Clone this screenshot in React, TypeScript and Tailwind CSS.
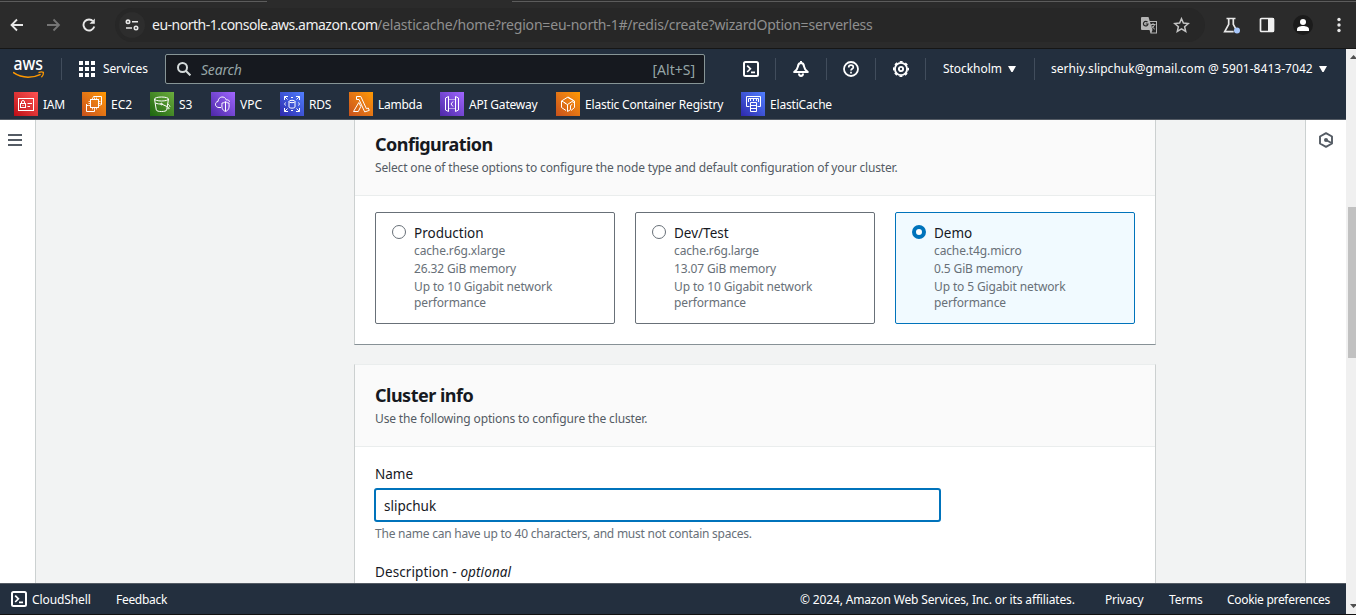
import React from "react";

type IconProps = { className?: string };

const CloudShellIcon = ({ className }: IconProps) => (
  <svg className={className} width="16" height="16" viewBox="0 0 16 16" fill="none" stroke="#fff" strokeWidth="2">
    <rect x="1" y="1" width="14" height="14" rx="1.5" />
    <path d="M4.2 4.6 7.4 7.8 4.2 11M8 11.3h4" strokeWidth="1.7" />
  </svg>
);

const BellIcon = () => (
  <svg width="16" height="16" viewBox="0 0 16 16" fill="none" stroke="#fff" strokeWidth="2" strokeLinejoin="round">
    <path d="M8 0v2M8 2C6 2 5.100 3.700 4.900 5.600 4.600 8 3.300 9.300 1.200 11h13.600c-2.100-1.700-3.400-3-3.700-5.400C10.900 3.700 10 2 8 2Z" />
    <path d="M6 12.500c0 1.500.8 2.400 2 2.400s2-.9 2-2.400" />
  </svg>
);

const HelpIcon = () => (
  <svg width="16" height="16" viewBox="0 0 16 16" fill="none" stroke="#fff" strokeWidth="1.8">
    <circle cx="8" cy="8" r="7" />
    <path d="M5.700 6.400C5.700 5 6.600 4.200 8 4.200s2.300.8 2.300 2c0 1.500-2.300 1.700-2.300 3.400M8 10.700v1.700" strokeWidth="1.700" />
  </svg>
);

const GearIcon = () => (
  <svg width="16" height="16" viewBox="0 0 16 16" fill="none" stroke="#fff">
    <circle cx="8" cy="8" r="6.100" strokeWidth="1.900" />
    <circle cx="8" cy="8" r="7.300" strokeWidth="1.500" strokeDasharray="2.900 2.834" strokeDashoffset="1.450" />
    <circle cx="8" cy="8" r="2.100" strokeWidth="1.900" />
  </svg>
);

const Caret = () => (
  <svg width="8" height="6" viewBox="0 0 8 6" fill="#fff">
    <path d="M0 0h8L4.600 6H3.400Z" />
  </svg>
);

const Divider = () => <div className="h-[22px] w-px shrink-0 bg-[#414d5c]" />;

const AwsLogo = () => (
  <svg className="-mt-[10px]" width="32" height="32" viewBox="0 -10 32 32">
    <text x="0.500" y="12" textLength="29.500" lengthAdjust="spacingAndGlyphs" fill="#fff" fontFamily="'Noto Sans', sans-serif" fontWeight="500" fontSize="17.500">
      aws
    </text>
    <path d="M.6 14.700C5 17.800 10 19.200 15 19.200c4.500 0 8.700-1 12-2.600" fill="none" stroke="#f90" strokeWidth="1.600" strokeLinecap="round" />
    <path d="M25.500 14.700c1.700-.8 3.700-.9 4.900-.4.200 1.600-.4 3.500-2 5" fill="none" stroke="#f90" strokeWidth="1.300" />
  </svg>
);

const glyphs: Record<string, React.ReactNode> = {
  IAM: (
    <>
      <rect x="4.500" y="6.500" width="15" height="12" />
      <rect x="6.500" y="11.500" width="5" height="4" />
      <path d="M7.500 11.500V10a1.500 1.500 0 0 1 3 0v1.500M9 13v1M13.500 11.500H18M13.500 14.500H16" />
    </>
  ),
  EC2: (
    <>
      <rect x="8.500" y="7.500" width="8" height="8" />
      <path d="M10.500 5.500v2M12.500 5.500v2M14.500 5.500v2M10.500 16v1.500M12.500 16v1.500M14.500 16v1.500M6.500 9.500h2M6.500 11.500h2M6.500 13.500h2M17 9.500h1.500M17 11.500h1.500M17 13.500h1.500" strokeOpacity=".8" />
      <path d="M11.500 4.500h8v8M4.500 12v7.500h8v-2M4.500 13.500h2M11.500 4.500v1M19.500 12.500h-1" />
    </>
  ),
  S3: (
    <>
      <ellipse cx="11.500" cy="7" rx="7" ry="2" />
      <path d="M4.500 7l1.800 11c.4 2 10 2 10.400 0l1.800-11M5.500 11c2 1 4 1 6 1l6.500 3c2 1.500 1.500 2-.5 1.500M17.800 12c1.500 1 2.300 2 2 3" />
      <circle cx="11.500" cy="12" r=".8" />
    </>
  ),
  VPC: (
    <>
      <path d="M10 15.500H8C3.500 15.500 3.500 9.800 7 9.500 7.300 4 14 3.500 15.300 8c2-.5 3 .5 3.200 1.800" />
      <path d="M14.500 9.500c1.300 1.200 2.300 1.500 3.500 1.500.3 4.500.2 7-3.500 8.500-3.700-1.500-3.800-4-3.500-8.500 1.200 0 2.200-.3 3.500-1.500ZM14.500 10v9" />
    </>
  ),
  RDS: (
    <>
      <path d="M4.500 8V4.500H8M4.500 4.500 7.500 7.500M16 4.500h3.500V8M19.500 4.500l-3 3M4.500 16v3.500H8M4.500 19.500l3-3M16 19.500h3.500V16M19.500 19.500l-3-3" />
      <ellipse cx="12" cy="9.500" rx="3" ry="1.200" />
      <path d="M9 9.500V15c0 1.500 6 1.500 6 0V9.500M5.500 10.500c-1 1-1 2 0 3M18.500 10.500c1 1 1 2 0 3M11 5.500h2M11 18.500h2" />
    </>
  ),
  Lambda: (
    <path d="M7.500 4.500h4.300l5.600 12.200 1.900-.7 1 2.400-4.600 1.500L10 7.500H7.500ZM9.800 10.500l2 4-2.500 5H4.500Z" />
  ),
  "API Gateway": (
    <path d="M8.500 4.500v15L5.500 18V6ZM15.500 4.500v15l3-1.500V6ZM9.500 7.500h1M11.500 7.500h1M13.500 7.500h1M9.500 16.500h1M11.500 16.500h1M13.500 16.500h1M13 9.500l-2 2.500 2 2.500" />
  ),
  "Elastic Container Registry": (
    <>
      <path d="M10 18.500 5.500 15.500V9L12 5l6.500 4v6.500l-3.500 3M5.500 9l4 2M12 5.500 18 9" />
      <path d="M11.500 19.500v-7l4.500-3 2.500 1.300M11.500 12.500 8.500 11M11.500 19.500l3-1.800v-4.200l1.800-1.200" />
    </>
  ),
  ElastiCache: (
    <path d="M8.500 14.500h-3v-10h14v10h-3M7.500 10V6.500h10V10M9.500 6.500v2.500M12.500 6.500v2.500M15.500 6.500v2.500M9.500 10.500h6v9h-6ZM9.500 13.500h6M9.500 16.500h6" />
  ),
};

const bookmarks = [
  { name: "IAM", slot: "w-[68px]", tile: "from-[#bd0816] to-[#ff5252]", text: "tracking-[-0.3px]" },
  { name: "EC2", slot: "w-[68px]", tile: "from-[#c8511b] to-[#ff9900]", text: "" },
  { name: "S3", slot: "w-[61px]", tile: "from-[#1b660f] to-[#6cae3e]", text: "" },
  { name: "VPC", slot: "w-[69px]", tile: "from-[#4d27a8] to-[#a166ff]", text: "" },
  { name: "RDS", slot: "w-[69px]", tile: "from-[#2e27ad] to-[#527fff]", text: "tracking-[-0.2px]" },
  { name: "Lambda", slot: "w-[91px]", tile: "from-[#c8511b] to-[#ff9900]", text: "tracking-[-0.25px]" },
  { name: "API Gateway", slot: "w-[116px]", tile: "from-[#4d27a8] to-[#a166ff]", text: "tracking-[-0.2px]" },
  { name: "Elastic Container Registry", slot: "w-[185px]", tile: "from-[#c8511b] to-[#ff9900]", text: "tracking-[-0.19px]" },
  { name: "ElastiCache", slot: "w-[110px]", tile: "from-[#2e27ad] to-[#527fff]", text: "tracking-[-0.18px]" },
];

function BrowserBar() {
  return (
    <div className="flex h-[49px] shrink-0 flex-col border-b border-[#161616] bg-[#2b2b2b]">
      <div className="flex h-[2px] shrink-0 justify-between pt-px">
        <div className="h-px w-[267px] bg-[#5c5c5c]" />
        <div className="h-px w-[844px] bg-[#5c5c5c]" />
      </div>
      <div className="flex h-[46px] items-center">
        <svg className="ml-[10px]" width="14" height="14" viewBox="0 0 14 14" fill="none" stroke="#e8e8e8" strokeWidth="1.800">
          <path d="M13 7H2M7 1.500 1.500 7 7 12.500" />
        </svg>
        <svg className="ml-[23px]" width="14" height="14" viewBox="0 0 14 14" fill="none" stroke="#757575" strokeWidth="1.800">
          <path d="M0 7h12M6.500 1.500 12 7l-5.500 5.500" />
        </svg>
        <svg className="ml-[21px]" width="14" height="14" viewBox="0 0 14 14" fill="none" stroke="#e8e8e8" strokeWidth="1.900">
          <path d="M12.300 8.500A5.500 5.500 0 1 1 11.300 3.500" />
          <path d="M12.800.5v5.300H7.500l2-2h1.600V2.200Z" fill="#e8e8e8" stroke="none" />
        </svg>
        <div className="ml-[19px] flex h-[34px] w-[1090px] items-center rounded-full bg-[#272727]">
          <div className="ml-[4px] flex size-[26px] items-center justify-center rounded-full bg-[#2d2d2d]">
            <svg width="14" height="12" viewBox="0 0 14 12" fill="none" stroke="#e8e8e8" strokeWidth="1.600">
              <circle cx="3" cy="2.800" r="1.700" />
              <path d="M7 2.800h6M1 9h6" />
              <circle cx="11" cy="9" r="1.700" />
            </svg>
          </div>
          <div className="ml-[7px] w-[989px] pb-[2px] font-['Noto_Sans',sans-serif] text-[14px] whitespace-nowrap text-[#8f8f8f]">
            <span className="inline-block w-[225px] tracking-[-0.5px] text-[#f0f0f0]">eu-north-1.console.aws.amazon.com</span>
            <span className="tracking-[-0.19px]">/elasticache/home?region=eu-north-1#/redis/create?wizardOption=serverless</span>
          </div>
          <svg width="17" height="17" viewBox="0 0 17 17" fill="none" stroke="#b4b4b4">
            <path d="M1 0h6.500l1.200 4H16v12.500H9.500L8.500 13H1a1 1 0 0 1-1-1V1a1 1 0 0 1 1-1Z" fill="#b4b4b4" stroke="none" />
            <path d="M9 5h6v10.500h-4.500l1-2.500Z" fill="#272727" stroke="none" />
            <path d="M6.500 5.200A2.300 2.300 0 1 0 7 7H4.700" stroke="#272727" strokeWidth="1.200" />
            <path d="M9.500 7.500h5M12 6v1.500M13.500 7.500c-.5 2-1.800 3.300-3.300 4.200M10.500 8.500c.7 1.500 1.800 2.700 3.300 3.700" strokeWidth="1" />
          </svg>
          <svg className="ml-[15px]" width="17" height="16" viewBox="0 0 17 16" fill="none" stroke="#c4c4c4" strokeWidth="1.500">
            <path d="M8.500 1.700l1.900 4.400 4.800.4-3.600 3.200 1.100 4.700-4.200-2.500-4.200 2.500 1.100-4.700L1.800 6.500l4.800-.4Z" />
          </svg>
        </div>
        <svg className="ml-[18px]" width="18" height="17" viewBox="0 0 18 17" fill="none" stroke="#e8e8e8" strokeWidth="1.700">
          <path d="M3.500 1.500h9M5.700 1.500v5.800L1.700 14.700h9M10.300 1.500v5.800l2.500 4.500" />
          <circle cx="14" cy="13.500" r="3" fill="#a8c7fa" stroke="none" />
        </svg>
        <svg className="ml-[18px]" width="16" height="16" viewBox="0 0 16 16">
          <rect x="1.500" y="1.500" width="13" height="13" rx="1" fill="none" stroke="#f1f1f1" strokeWidth="1.700" />
          <path d="M9 1h6v14H9Z" fill="#f1f1f1" />
        </svg>
        <svg className="ml-[18px]" width="20" height="20" viewBox="0 0 20 20">
          <circle cx="10" cy="10" r="10" fill="#1b1b1b" />
          <circle cx="10" cy="7" r="3" fill="#fff" />
          <path d="M4 16v-1.800C4 12 7 11 10 11s6 1 6 3.200V16Z" fill="#fff" />
        </svg>
        <svg className="ml-[24px]" width="4" height="16" viewBox="0 0 4 16" fill="#e8e8e8">
          <circle cx="2" cy="2.500" r="1.700" />
          <circle cx="2" cy="8" r="1.700" />
          <circle cx="2" cy="13.500" r="1.700" />
        </svg>
      </div>
    </div>
  );
}

function ConsoleHeader() {
  return (
    <header className="flex h-[71px] shrink-0 flex-col border-b border-[#545b64] bg-[#232f3e] text-[12px] text-white">
      <div className="flex h-[40px] items-center">
        <div className="ml-[13px] w-[48px]">
          <AwsLogo />
        </div>
        <Divider />
        <svg className="ml-[17px]" width="16" height="16" viewBox="0 0 16 16" fill="#fff">
          <path d="M0 0h4v4H0zM6 0h4v4H6zM12 0h4v4h-4zM0 6h4v4H0zM6 6h4v4H6zM12 6h4v4h-4zM0 12h4v4H0zM6 12h4v4H6zM12 12h4v4h-4z" />
        </svg>
        <span className="ml-[8px] w-[62px] shrink-0 tracking-[-0.12px]">Services</span>
        <div className="flex h-[30px] w-[540px] items-center justify-between rounded-[2px] border border-[#879596] bg-[#16191f] pr-[9px] pl-[11px] text-[14px] text-[#95a5a6]">
          <div className="flex items-center gap-[10px]">
            <svg width="14" height="14" viewBox="0 0 14 14" fill="none" stroke="#d5dbdb" strokeWidth="2">
              <circle cx="5.500" cy="5.500" r="4.500" />
              <path d="m8.800 8.800 4.600 4.600" />
            </svg>
            <span className="pt-px tracking-[-0.2px] italic">Search</span>
          </div>
          <span className="pt-px text-[14px]">[Alt+S]</span>
        </div>
        <div className="flex items-center pl-[38px]">
          <CloudShellIcon className="mr-[16px]" />
          <Divider />
          <div className="mx-[17px]"><BellIcon /></div>
          <Divider />
          <div className="mr-[16px] ml-[16px]"><HelpIcon /></div>
          <Divider />
          <div className="mr-[16px] ml-[17px]"><GearIcon /></div>
          <Divider />
          <div className="flex w-[108px] items-center pl-[17px]">
            <span className="w-[65px] tracking-[-0.05px] whitespace-nowrap">Stockholm</span>
            <Caret />
          </div>
          <Divider />
          <div className="flex items-center pl-[16px]">
            <span className="w-[268px] tracking-[0.04px] whitespace-nowrap">serhiy.slipchuk@gmail.com @ 5901-8413-7042</span>
            <Caret />
          </div>
        </div>
      </div>
      <nav className="flex h-[30px] items-center pl-[14px]">
        {bookmarks.map((b) => (
          <div key={b.name} className={`flex shrink-0 items-center gap-[5px] ${b.slot}`}>
            <div className={`size-6 shrink-0 bg-linear-to-tr ${b.tile}`}>
              <svg width="24" height="24" viewBox="0 0 24 24" fill="none" stroke="#fff" strokeWidth="1">
                {glyphs[b.name]}
              </svg>
            </div>
            <span className={`pt-px whitespace-nowrap ${b.text}`}>{b.name}</span>
          </div>
        ))}
      </nav>
    </header>
  );
}

const options = [
  { title: "Production", type: "cache.r6g.xlarge", memory: "26.32 GiB memory", speed: "Up to 10 Gigabit network", selected: false },
  { title: "Dev/Test", type: "cache.r6g.large", memory: "13.07 GiB memory", speed: "Up to 10 Gigabit network", selected: false },
  { title: "Demo", type: "cache.t4g.micro", memory: "0.5 GiB memory", speed: "Up to 5 Gigabit network", selected: true },
];

function OptionTile({ option }: { option: (typeof options)[number] }) {
  return (
    <label
      className={`flex h-[112px] w-[240px] gap-[8px] rounded-[2px] border pt-[11px] pl-[16px] ${
        option.selected ? "border-[#0073bb] bg-[#f1faff]" : "border-[#687078] bg-white"
      }`}
    >
      <span
        className={`mt-px size-[14px] shrink-0 rounded-full bg-white ${
          option.selected ? "border-[4px] border-[#0073bb]" : "border border-[#687078]"
        }`}
      />
      <span className="flex flex-col pt-px text-[12px] leading-[16px] tracking-[-0.13px] whitespace-nowrap text-[#687078]">
        <span className="h-[18px] text-[13.5px] tracking-normal text-[#16191f]">{option.title}</span>
        <span className="h-[18px]">{option.type}</span>
        <span className="h-[18px]">{option.memory}</span>
        <span>{option.speed}</span>
        <span>performance</span>
      </span>
    </label>
  );
}

function Content() {
  return (
    <main className="flex min-h-0 flex-1 overflow-hidden">
      <aside className="w-[36px] shrink-0 border-r border-[#ccd1d1] bg-white pt-[14px] pl-[8px]">
        <svg width="14" height="12" viewBox="0 0 14 12" fill="#545b64">
          <path d="M0 0h14v2H0zM0 5h14v2H0zM0 10h14v2H0z" />
        </svg>
      </aside>
      <div className="flex flex-1 flex-col pl-[318px]">
        <section className="h-[225px] w-[802px] shrink-0 border-x border-b border-x-[#ccd0d0] border-b-[#879196] bg-white">
          <div className="flex h-[76px] flex-col border-b border-[#eaeded] bg-[#fafafa] pt-[13px] pl-[20px]">
            <h2 className="h-[27px] text-[18px] leading-[22px] font-bold tracking-[-0.52px] text-[#16191f]">Configuration</h2>
            <p className="text-[12px] leading-[16px] tracking-[-0.158px] text-[#545b64]">
              Select one of these options to configure the node type and default configuration of your cluster.
            </p>
          </div>
          <div className="flex gap-[20px] pt-[16px] pl-[20px]">
            {options.map((o) => (
              <OptionTile key={o.title} option={o} />
            ))}
          </div>
        </section>
        <section className="mt-[19px] h-[300px] w-[802px] shrink-0 border-x border-t border-x-[#ccd0d0] border-t-[#eaeded] bg-white">
          <div className="flex h-[82px] flex-col border-b border-[#eaeded] bg-[#fafafa] pt-[19px] pl-[20px]">
            <h2 className="h-[27px] text-[18px] leading-[22px] font-bold tracking-[-0.5px] text-[#16191f]">Cluster info</h2>
            <p className="text-[12px] leading-[16px] tracking-[-0.14px] text-[#545b64]">
              Use the following options to configure the cluster.
            </p>
          </div>
          <div className="flex flex-col pt-[16px] pl-[19px] text-[13.5px] text-[#16191f]">
            <label className="h-[25px] pl-px leading-[22px]">Name</label>
            <div className="flex h-[34px] w-[567px] items-center rounded-[3px] border-2 border-[#0073bb] bg-white pt-[2px] pl-[8px]">
              slipchuk
            </div>
            <p className="mt-[4px] pl-px text-[12px] leading-[16px] tracking-[-0.23px] text-[#687078]">
              The name can have up to 40 characters, and must not contain spaces.
            </p>
            <label className="mt-[19px] pl-px leading-[22px] tracking-[0.1px]">
              Description - <i>optional</i>
            </label>
          </div>
        </section>
      </div>
      <aside className="w-[41px] shrink-0 border-l border-[#ccd1d1] bg-white pt-[12px] pl-[12px]">
        <svg width="16" height="16" viewBox="0 0 16 16" fill="none" stroke="#545b64" strokeWidth="1.900">
          <path d="M8 1.100 14 4.500v7L8 14.900 2 11.500v-7Z" strokeLinejoin="round" />
          <circle cx="8" cy="8" r="2" fill="#545b64" stroke="none" />
          <path d="m8 8 5.500 3" />
        </svg>
      </aside>
    </main>
  );
}

function Footer() {
  return (
    <footer className="flex h-[31px] shrink-0 items-center border-t border-[#545b64] bg-[#232f3e] text-[12px] whitespace-nowrap text-white">
      <CloudShellIcon className="ml-[11px]" />
      <span className="ml-[5px] w-[84px] pt-px tracking-[-0.1px]">CloudShell</span>
      <span className="w-[684px] pt-px tracking-[-0.3px]">Feedback</span>
      <span className="w-[305px] pt-px tracking-[-0.15px]">© 2024, Amazon Web Services, Inc. or its affiliates.</span>
      <span className="w-[64px] pt-px tracking-[-0.25px]">Privacy</span>
      <span className="w-[58px] pt-px tracking-[-0.2px]">Terms</span>
      <span className="pt-px tracking-[-0.3px]">Cookie preferences</span>
    </footer>
  );
}

export default function App() {
  return (
    <div className="flex h-[615px] w-[1356px] flex-col overflow-hidden bg-[#111] font-['Noto_Sans',sans-serif]">
      <BrowserBar />
      <div className="flex h-[565px] shrink-0">
        <div className="flex w-[1346px] shrink-0 flex-col bg-[#f2f3f3]">
          <ConsoleHeader />
          <Content />
          <Footer />
        </div>
        <div className="flex w-[10px] flex-col bg-[#f0f0f0]">
          <svg className="mt-[6px] ml-[4px]" width="6" height="4" viewBox="0 0 6 4" fill="#505050">
            <path d="M0 4 3.500 0 6 2.500V4Z" />
          </svg>
          <div className="mt-[148px] ml-[2px] h-[151px] w-[8px] bg-[#c1c1c1]" />
          <svg className="mt-[246px] ml-[4px]" width="6" height="4" viewBox="0 0 6 4" fill="#505050">
            <path d="M0 0h6v1.500L3.500 4Z" />
          </svg>
        </div>
      </div>
    </div>
  );
}
